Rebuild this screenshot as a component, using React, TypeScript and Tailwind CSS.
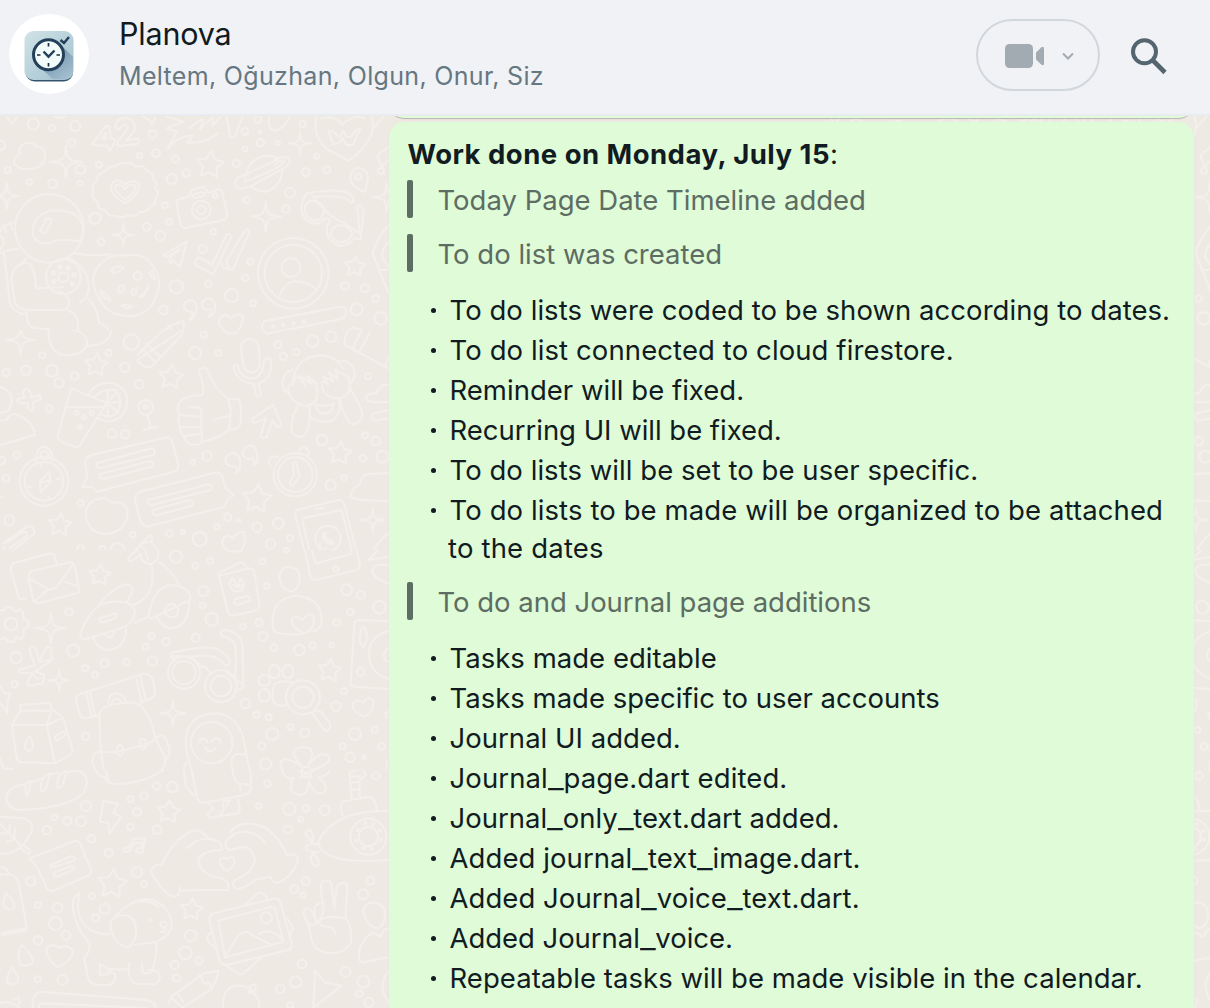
type Dot = [number, number, number];

interface Doodles {
  y: number;
  dots: Dot[];
  stars: Dot[];
  sparks: Dot[];
  paths: string[];
}

const starPath = ([x, y, r]: Dot) => {
  const pts: string[] = [];
  for (let i = 0; i < 10; i++) {
    const a = -Math.PI / 2 + 0.1 + (i * Math.PI) / 5;
    const q = i % 2 ? r * 0.52 : r;
    pts.push(`${(x + Math.cos(a) * q).toFixed(1)} ${(y + Math.sin(a) * q).toFixed(1)}`);
  }
  return `M${pts.join("L")}Z`;
};

const sparkPath = ([x, y, r]: Dot) => {
  const k = r * 0.22;
  return `M${x} ${y - r}Q${x + k * 0.4} ${y - k} ${x + k} ${y - k}Q${x + k} ${y - k * 0.4} ${x + r} ${y}Q${x + k} ${y + k * 0.4} ${x + k} ${y + k}Q${x + k * 0.4} ${y + k} ${x} ${y + r}Q${x - k * 0.4} ${y + k} ${x - k} ${y + k}Q${x - k} ${y + k * 0.4} ${x - r} ${y}Q${x - k} ${y - k * 0.4} ${x - k} ${y - k}Q${x - k * 0.4} ${y - k} ${x} ${y - r}Z`;
};

const ring = (x: number, y: number, r: number, s = r) =>
  `M${x - r} ${y}a${r} ${s} 0 1 0 ${2 * r} 0a${r} ${s} 0 1 0 ${-2 * r} 0Z`;

const doodles: Doodles[] = [
  {
    y: 110,
    dots: [
      [100, 42, 17], [156, 54, 9], [226, 48, 15], [215, 98, 11], [457, 73, 12], [468, 129, 12], [419, 137, 8],
      [527, 148, 10], [515, 207, 15], [559, 189, 11], [297, 164, 9], [242, 178, 14], [23, 180, 9], [88, 216, 8],
      [157, 221, 13], [240, 220, 8], [0, 106, 15], [285, 325, 17], [440, 350, 12], [481, 377, 14], [507, 335, 9],
      [495, 286, 9], [303, 395, 10], [640, 365, 8], [608, 417, 12], [751, 455, 9], [736, 504, 10], [625, 521, 10],
      [529, 530, 20], [695, 557, 20], [759, 580, 9], [490, 600, 13], [609, 675, 8], [773, 28, 11], [735, 64, 10],
      [779, 65, 4], [782, 98, 11], [834, 100, 6], [735, 117, 7], [908, 41, 9], [950, 139, 7], [709, 160, 11],
      [918, 187, 12], [981, 179, 10], [741, 270, 10], [870, 248, 15], [858, 297, 11], [1035, 528, 12],
      [1094, 535, 12], [1127, 566, 10], [1070, 598, 18], [1142, 625, 19], [1143, 183, 9],
      [646, 257, 7], [604, 300, 28], [604, 300, 13], [1075, 200, 9], [873, 473, 28], [190, 502, 15],
      [160, 488, 5], [180, 471, 5], [205, 473, 5], [222, 494, 5], [217, 521, 5], [162, 514, 5],
      [413, 497, 12], [820, 650, 4], [850, 645, 4], [881, 640, 4], [912, 635, 4],
    ],
    stars: [[630, 165, 42], [1065, 470, 32]],
    sparks: [[198, 155, 48], [20, 258, 38], [370, 375, 32], [797, 320, 45], [900, 100, 33], [1160, 262, 42]],
    paths: [
      "M20 20L35 42L52 20M165 20Q180 28 195 20",
      "M318 48L276 104L322 108L328 122L340 106L345 88L332 84L328 48ZM306 85L318 68L317 88Z",
      "M345 50Q350 20 385 25Q412 35 402 65L378 92L412 85Q422 92 412 102L355 108Q345 98 358 88L382 58Q386 42 370 45Q360 52 358 60Z",
      "M430 20L448 30L455 42L466 25M500 20L550 35L500 55L530 65L502 118Q525 85 562 78L580 75L562 98Q620 100 655 70M570 55Q600 25 610 30L600 58Q630 25 640 22L637 48L662 20M680 20L690 80Q705 88 712 60L728 20M808 22Q800 60 828 62Q850 55 870 20",
      "M950 22Q935 80 985 120L1045 152Q1075 135 1095 105Q1130 60 1115 22M965 25Q1005 15 1027 44Q1055 12 1095 24M1115 60L1150 20",
      "M985 62L1000 104L1017 98L1028 85L1040 105H1058L1081 56L1066 62L1052 82L1040 80L1030 62L1018 82L1003 66Z",
      "M60 130Q42 140 42 160Q60 182 90 177Q133 175 136 135Q132 110 108 108Q92 92 70 103Q54 112 60 130Z",
      "M320 178Q330 165 345 170Q365 155 380 160Q395 155 407 170Q430 163 440 182Q458 185 460 208Q475 218 466 235Q482 250 467 264Q470 285 450 288Q440 310 420 305Q405 325 385 315Q365 328 348 317Q325 322 315 300Q292 300 292 275Q272 263 280 245Q272 222 290 214Q290 190 308 188Z",
      "M375 280Q332 255 332 230Q338 208 360 212L375 224Q400 205 416 220Q425 250 375 280ZM375 268Q342 245 344 230Q355 215 375 237Q395 215 407 230Q405 250 375 268Z",
      "M735 210Q742 150 790 139Q825 135 835 148L715 203Q700 215 710 231Q720 240 750 230L860 170Q875 155 865 143Q852 138 825 148M846 180Q846 225 800 245Q770 245 752 228M735 215Q850 170 852 155Q840 148 825 165",
      "M532 270L570 258L574 240L612 230L624 248L658 238Q665 238 667 250L681 310Q682 325 670 330L555 354Q545 352 541 340L530 282ZM580 254L605 246Q617 250 612 257L585 264Q575 262 580 254Z",
      "M1095 246Q1050 230 1051 200Q1055 172 1080 174Q1105 180 1104 205Z M1165 112L1140 128L1133 140L1145 172L1155 160L1166 150",
      "M920 250Q1000 235 1040 247Q1065 260 1060 275Q1052 282 1040 266Q1010 255 938 260L990 315Q1010 330 1030 338L1078 370L1074 305Q1065 290 1080 285Q1095 290 1088 330L1082 388L1062 385Q1050 405 1020 408Q980 395 980 355L990 328L975 325Q960 345 935 340Q900 325 905 280Q912 265 920 250Z",
      "M915 300Q915 275 935 272Q965 275 973 300Q970 330 942 332Q918 325 915 300ZM992 370Q998 345 1022 345Q1050 350 1058 372Q1045 398 1020 397Q997 390 992 370Z",
      ring(148, 355, 103),
      "M98 370Q95 320 150 302Q240 295 249 352Q252 392 230 394Q180 382 150 400Q105 405 98 370ZM125 355L138 328Q148 320 155 332L138 367Q125 370 120 362Z",
      "M48 335Q10 340 0 365M12 345L20 368M30 338L38 360M0 430Q30 415 55 418M0 378Q15 385 10 405L0 418M12 430L30 580Q38 608 80 614M80 445L65 460M75 458Q30 470 35 515L45 580Q60 600 85 600H190Q210 595 207 570Q198 548 178 545M108 535Q105 455 75 458M108 535L190 532",
      "M225 430Q280 440 330 433M207 445Q275 480 265 545Q262 565 240 578M265 568Q290 590 298 640Q335 650 330 690M218 664Q238 660 245 680M80 603Q78 655 110 655L150 658V690M205 602Q240 610 233 665",
      ring(190, 500, 52),
      "M295 470Q325 430 370 437Q435 425 455 465Q490 500 470 555Q455 605 400 618Q325 620 300 570Q262 510 295 470ZM335 480Q350 465 370 472Q365 485 338 490ZM355 545Q355 525 370 527Q378 540 360 550ZM395 550Q395 533 410 534Q410 555 398 555ZM430 560Q448 530 445 525Q440 550 418 560ZM455 500L448 490L458 482L467 510ZM300 540Q335 565 330 572Q305 565 300 540ZM365 588Q380 580 395 590Q385 600 365 588Z",
      "M490 435L560 395L540 470L518 450L513 460Q505 455 510 445L540 418L502 440Z",
      "M588 450Q580 462 595 470L640 494L694 380Q690 368 680 374L636 464L602 445Q592 440 588 450ZM688 472L678 455L736 360Q745 355 748 368L698 480L668 472L665 460",
      ring(880, 490, 106), ring(880, 490, 86),
      "M838 560Q855 515 885 514Q925 515 948 538",
      "M590 590Q585 570 570 570Q550 575 552 592Q565 610 578 605Q580 618 568 630Q592 620 590 590ZM645 585Q640 565 620 565Q603 575 606 592Q620 602 632 598Q635 612 625 622Q650 610 645 585Z",
      "M704 674Q658 660 656 635Q662 612 682 616L693 625Q715 605 729 620Q728 650 704 674Z",
      "M800 632L1020 590Q1040 590 1038 610Q1035 625 1020 628L808 670Q785 670 786 648Q788 635 800 632Z",
      "M1166 345Q1130 385 1118 430L1138 482L1166 550M1166 395Q1138 430 1150 448L1166 470M1138 480H1166",
      "M470 690Q490 650 550 633Q555 660 545 690M505 645Q520 670 540 680",
      "M1040 690Q1045 645 1070 655L1166 690M1100 668L1090 690",
    ],
  },
  {
    y: 330,
    dots: [
      [127, 76, 9], [78, 121, 14], [156, 122, 17], [19, 128, 11], [177, 158, 14], [224, 138, 11], [326, 68, 9],
      [374, 112, 14], [394, 36, 23], [418, 163, 13], [585, 69, 18], [655, 69, 9], [611, 14, 9], [148, 236, 10],
      [336, 311, 13], [376, 313, 13], [834, 44, 11], [850, 79, 11], [889, 66, 9], [938, 33, 17], [993, 20, 16],
      [1104, 139, 9], [966, 330, 16], [1095, 316, 9], [1127, 333, 13], [1089, 384, 10], [1147, 380, 18],
      [992, 465, 15], [1032, 443, 8], [621, 378, 14], [578, 396, 7], [50, 375, 10], [18, 445, 10], [3, 392, 12],
      [242, 520, 9], [28, 571, 15], [242, 655, 9], [307, 656, 9], [352, 660, 21], [398, 614, 8], [508, 610, 10],
      [549, 607, 6], [599, 627, 21], [528, 680, 18], [651, 591, 8], [683, 561, 11], [716, 571, 5], [771, 592, 14],
      [835, 580, 16], [870, 624, 9], [812, 642, 14], [859, 662, 8], [437, 232, 22], [437, 230, 6],
      [230, 248, 6], [275, 250, 6], [253, 262, 6], [239, 291, 6], [133, 376, 12],
    ],
    stars: [[289, 105, 36], [513, 142, 38], [1020, 370, 36], [771, 507, 45], [180, 585, 35]],
    sparks: [[62, 30, 44], [1118, 570, 36]],
    paths: [
      "M145 0Q145 75 205 76Q260 70 262 35Q250 0 215 0M262 48Q330 45 333 0",
      "M412 75L490 0M548 0Q550 15 530 30L455 110Q430 118 412 90ZM425 55L465 95M438 40L480 80",
      "M790 0L800 12L850 0M668 0Q690 18 710 8M1045 0Q1030 30 1035 45L1166 115M1085 0L1058 55M1110 8L1078 65M1166 80L1155 110",
      "M0 172Q35 180 35 215Q30 250 0 248M0 272L20 270Q30 250 45 252Q100 270 104 315L0 345",
      "M68 190Q78 165 90 185L95 203L118 195Q128 205 118 210L98 218L100 238Q92 248 85 235L82 220L58 218Q45 208 60 205L75 204Z",
      "M214 175L174 312Q170 330 195 340L235 353L310 235L318 218ZM200 232H312",
      "M268 190Q285 160 325 158Q385 165 382 220Q370 275 320 274L293 265M285 200Q305 175 345 180Q370 210 355 245Q330 270 300 250M320 218L325 180M320 218L348 190M320 218L362 215M320 218L352 245M320 218L325 260",
      "M442 254L452 294M430 300L472 290",
      "M600 118Q618 105 627 130Q640 175 685 207H715Q725 215 722 280Q715 300 688 298M598 125Q615 175 608 195Q560 195 540 215Q525 240 540 255L605 260Q600 285 605 310Q610 330 600 342Q575 350 560 335L550 317Q538 305 540 290Q530 270 540 258M570 232H595Q610 240 602 258M545 292L602 290M555 318L602 312M685 207L692 240L688 298Q660 325 608 335M640 270L685 258",
      "M722 50Q730 25 750 26Q772 30 776 50L780 105Q770 128 755 127Q735 125 730 105ZM700 110Q705 100 713 105Q720 145 757 146Q790 140 792 90Q800 78 812 90Q820 145 775 160L783 190Q778 205 768 195L762 162Q710 155 700 110Z",
      "M820 224L843 280Q842 295 830 290L817 272L800 320Q790 330 782 318L798 265L765 278Q752 275 758 265Z",
      "M878 160Q885 80 965 76Q1010 80 1028 115M878 120Q850 125 847 160Q850 185 870 190M1010 95Q1050 85 1062 120Q1070 145 1050 160M870 195Q855 165 878 165Q880 140 898 142L915 165L898 138L935 160L920 137L948 160Q965 225 915 227Q880 220 870 195ZM968 178Q960 140 985 165L970 140L1000 155L985 125L1015 148L1005 120L1045 140Q1060 200 1015 205Q980 205 968 178ZM895 225Q870 270 875 305Q890 328 910 318Q935 290 928 225M1050 175Q1085 230 1087 255Q1075 290 1050 280Q1025 245 1020 205M930 260Q960 285 1000 270Q1030 240 1015 205M945 222Q975 235 1000 220Q995 255 968 250Q950 245 945 222Z",
      "M1166 165Q1140 160 1128 190Q1095 190 1098 205Q1105 222 1166 215M1166 240L1120 250Q1110 262 1122 272L1166 265",
      "M275 375L500 322Q512 322 517 335L535 405Q535 420 522 425L290 485L275 470L247 472L262 440L255 395Q258 380 275 375ZM290 400L455 355Q470 360 460 375L300 415Q285 412 290 400ZM300 432L450 393Q465 400 455 410L310 447Q297 445 300 432Z",
      "M420 485L650 427Q665 428 668 445L678 475L702 495L680 512L675 530L440 590Q425 585 420 570L405 510Q405 490 420 485ZM445 510L625 463Q640 465 632 480L455 525Q440 522 445 510ZM458 540L570 510Q585 515 575 527L470 556Q452 555 458 540Z",
      ring(132, 454, 73), ring(132, 454, 58),
      "M108 392Q110 350 133 350Q158 355 158 392M120 455L148 425L152 455L122 487ZM125 457L150 450M122 400L125 412M95 470L82 470M145 500L147 510M170 448L182 445",
      "M290 508Q255 520 257 560Q270 615 325 612Q380 600 383 550Q380 510 335 518Q320 498 290 508Z",
      "M10 640L80 590Q105 585 103 610L35 665Q10 668 10 650M20 638L70 605Q85 605 80 617L30 655",
      "M0 500L8 500M50 690L150 670Q170 670 172 690",
      "M720 400Q720 370 700 368Q675 375 676 395Q685 412 705 408Q715 418 708 430Q722 425 720 400ZM772 375Q768 345 748 347Q725 355 728 375Q740 392 757 385Q765 392 760 405Q775 400 772 375Z",
      ring(886, 434, 65), ring(886, 434, 52),
      "M878 400Q885 390 890 402L898 440L880 465Q868 468 870 455L882 435ZM835 380Q805 375 806 400L815 410M900 365Q900 350 915 352Q930 358 925 375",
      "M1166 430Q1130 430 1125 432Q1085 425 1080 462Q1050 480 1052 500Q1060 512 1166 513",
      "M890 540L1015 510Q1030 510 1035 530L1075 690M890 540Q882 550 890 570L920 690M908 565L1025 540L1062 690M908 575L935 690M948 538L970 533",
      ring(984, 625, 38), "M960 640L958 668L978 655M968 610Q970 645 1000 642L995 630L985 635L975 620L978 610Z",
      "M702 667Q668 660 666 637Q670 615 690 618L700 625Q715 600 732 608Q740 640 725 660Z",
      "M380 690L430 635L450 615Q462 620 452 635Q480 660 475 690M425 650Q440 665 440 690M410 665Q420 675 420 690M430 640Q450 630 455 640",
      "M1166 610Q1130 635 1108 690",
    ],
  },
  {
    y: 550,
    dots: [
      [528, 20, 18], [586, 47, 9], [630, 33, 9], [610, 124, 15], [608, 167, 8], [635, 208, 19], [207, 186, 11],
      [454, 259, 9], [498, 275, 11], [437, 290, 9], [587, 263, 12], [220, 302, 18], [48, 323, 17], [314, 340, 12],
      [256, 355, 9], [285, 374, 9], [380, 336, 10], [457, 333, 14], [44, 403, 9], [787, 34, 8], [800, 108, 8],
      [729, 229, 8], [777, 218, 11], [789, 259, 14], [822, 293, 10], [898, 300, 16], [938, 286, 9], [995, 286, 7],
      [1010, 218, 10], [1040, 119, 16], [1083, 135, 12], [1051, 186, 10], [1138, 172, 19], [1082, 366, 11],
      [1032, 423, 9], [1008, 469, 14], [736, 461, 14], [769, 494, 9], [806, 502, 9], [817, 552, 18], [872, 531, 9],
      [914, 548, 13], [785, 588, 11], [797, 642, 17], [1065, 552, 18], [1124, 539, 9], [1028, 589, 9],
      [1050, 622, 14], [1091, 621, 5], [1144, 590, 10], [257, 559, 11], [33, 222, 19], [1008, 57, 8],
      [919, 664, 14],
    ],
    stars: [[299, 76, 33], [989, 362, 36]],
    sparks: [[152, 235, 46], [178, 391, 32], [519, 490, 38]],
    paths: [
      "M170 40Q165 10 150 10L45 38Q30 42 33 60L55 140Q60 152 78 145M100 62L210 37Q225 38 225 55L238 120Q235 130 222 132L115 160Q102 160 98 145L85 80Q88 65 100 62ZM88 85L145 118Q165 120 175 105L220 42M145 118L102 155M195 95L235 110",
      "M0 180Q10 185 20 172H35L45 185L60 178Q75 190 70 205L85 215V232L70 238Q75 258 62 268L48 260L40 275H22L15 262L0 268",
      "M385 32Q380 20 415 0M385 32Q400 38 420 12Q425 40 450 42Q480 35 475 0M455 42Q470 140 400 165M478 38Q510 55 538 105M435 0L445 30",
      "M300 160Q350 105 380 103Q405 110 395 130L380 157M240 255Q270 165 330 155Q400 150 405 185Q400 225 360 235L260 267Q240 270 240 255ZM298 205L345 190Q355 195 345 205L308 217Q295 215 298 205ZM278 262Q295 300 330 300Q380 290 378 235M315 252Q330 275 345 245M405 218L445 200Q460 105 520 105Q575 115 570 150L465 200Q450 210 445 200M468 198Q485 235 515 235Q570 225 568 152",
      ring(515, 182, 20),
      "M88 300Q100 280 108 300L118 335L140 292Q158 285 153 310L158 328L105 365L133 375L128 400L88 408Q75 405 88 385L98 370L60 368Q50 355 70 357L105 345ZM118 335L150 330M98 372Q110 390 120 385",
      "M0 410L15 430L30 430L22 465V490L10 470L0 460",
      "M228 450Q225 435 245 430L430 372Q455 370 460 395L466 430Q460 450 435 450L420 462M228 450L240 495Q248 510 270 502L298 495M258 430L275 500M270 427L285 497M408 380L425 455M420 377L438 452M325 460Q325 430 350 430Q375 435 378 460M335 458Q350 435 365 458",
      "M298 505Q295 465 350 463Q405 450 425 470Q455 500 465 565L495 620Q500 660 465 675Q390 690 385 690M298 505L302 600L315 690M302 605Q275 605 278 635Q285 680 310 680M302 605Q340 612 405 592Q450 585 465 565Q485 550 495 563Q520 610 500 625M352 590Q360 580 368 590V612Q360 622 352 612ZM420 572Q428 562 438 572V592Q428 605 422 592Z",
      "M60 465L145 458Q155 460 155 475L190 505L217 598Q218 612 210 615L165 640L60 636Q50 630 50 620L35 525L62 482ZM62 482H155L140 525H35M140 525L165 640M140 525L185 505M90 558Q65 590 82 602Q110 605 90 558ZM168 557L190 545Q200 550 192 558L170 572Q160 568 168 557Z",
      "M0 625L10 655L38 657L15 665L0 680M100 690Q120 672 130 680L120 690M150 690Q165 665 182 668L175 690M195 690Q200 665 225 665Q260 670 262 690",
      "M655 70L725 35L740 52M655 70Q655 78 670 75L745 55Q760 55 763 68L778 165Q778 180 765 182L695 198Q685 195 682 180L655 70ZM705 148L740 138Q755 142 750 152L712 165Q700 162 705 148Z",
      "M698 85Q685 95 690 108Q695 125 715 125Q735 115 732 98Q725 85 718 88M703 90L715 112L722 85M698 105Q710 115 727 105",
      "M838 85Q840 50 868 50Q900 55 900 85Q895 120 875 125Q845 120 838 85ZM820 240Q805 145 890 137Q965 145 965 210Q965 240 940 243M820 240Q830 255 905 253M912 250Q875 235 875 210Q885 190 908 210Q925 185 940 198Q948 225 925 245Z",
      "M915 0L930 75Q935 92 950 90L1070 60Q1080 55 1080 45L1070 0M935 0L948 40L1055 12V0M680 0Q700 8 725 3M850 0Q860 15 870 0M1105 30L1135 0M1105 30L1166 20M1166 45Q1115 40 1117 65Q1120 85 1166 100",
      "M1166 213L1075 210Q1062 212 1063 225L1052 395Q1050 410 1065 410L1166 417M1166 243Q1105 260 1107 315Q1110 370 1166 387M1166 295Q1145 305 1155 330L1166 335M1083 238Q1095 225 1098 245L1103 265L1090 292Q1075 275 1080 262Z",
      "M515 325Q505 310 520 307Q620 285 650 297Q690 315 690 340Q680 355 665 335Q645 310 575 320L605 350Q625 350 630 370M575 320L518 318L528 335M705 400Q710 310 705 282Q695 265 665 257Q655 240 678 240Q730 250 728 300L730 410Q720 425 705 418M680 368L730 405",
      ring(552, 368, 48), ring(552, 368, 35), ring(663, 408, 48), ring(663, 408, 31),
      ring(823, 365, 16, 20), ring(864, 365, 16, 20), ring(793, 391, 17, 17), ring(793, 436, 17, 19),
      "M877 397Q820 385 820 415L817 445Q825 475 857 465",
      ring(909, 442, 51), ring(909, 442, 32),
      "M940 490Q945 475 965 487L990 520Q995 540 978 543Q970 540 938 490",
      "M1097 500Q1060 490 1057 465Q1065 445 1090 457Q1105 435 1120 452Q1125 480 1097 500Z",
      ring(635, 578, 62),
      "M562 620Q540 495 640 490Q720 490 735 590L755 690M597 575Q600 565 610 566Q620 568 622 578M635 575Q640 562 650 565Q660 565 660 575M615 592Q630 615 648 592M565 620L578 690M565 638Q545 640 555 690M695 650Q690 610 720 612L738 615M695 650L705 690",
      "M905 648Q870 610 885 598Q905 585 930 595Q945 610 925 645Q960 600 985 618Q1000 640 940 658Q985 662 990 690M905 650Q850 610 842 640Q835 670 900 665L875 690",
      "M1166 485L1155 490L1160 505M1045 685Q1060 655 1070 665Q1095 650 1098 685M1160 635V660M1120 680Q1130 665 1140 680",
    ],
  },
  {
    y: 770,
    dots: [
      [258, 109, 15], [243, 154, 15], [202, 152, 12], [163, 142, 8], [141, 180, 13], [274, 206, 11], [326, 248, 12],
      [392, 87, 9], [432, 77, 11], [470, 48, 11], [517, 51, 16], [411, 126, 12], [392, 171, 10], [471, 179, 13],
      [411, 307, 15], [432, 343, 9], [92, 334, 14], [114, 405, 9], [173, 413, 14], [276, 379, 9], [314, 416, 15],
      [287, 444, 11], [166, 461, 19], [198, 496, 13], [114, 511, 13], [187, 629, 15], [113, 628, 9], [572, 497, 17],
      [556, 549, 19], [597, 572, 11], [524, 585, 12], [529, 624, 11], [776, 108, 8], [802, 41, 10], [868, 117, 18],
      [918, 115, 10], [902, 148, 7], [974, 121, 15], [864, 179, 12], [1128, 18, 11], [1111, 332, 12], [1089, 373, 15],
      [917, 333, 12], [883, 357, 12], [910, 376, 8], [906, 582, 13], [1037, 605, 15], [887, 636, 17], [841, 656, 13],
      [1090, 635, 18], [1078, 671, 10], [1107, 697, 14], [870, 706, 9], [799, 443, 17], [452, 450, 3],
      [1105, 200, 29], [1096, 160, 3], [1120, 162, 3], [1140, 182, 3], [1143, 210, 3], [1115, 237, 3], [1091, 235, 3],
      [1068, 212, 3], [1073, 180, 3], [919, 8, 14],
    ],
    stars: [[506, 126, 36], [337, 342, 45], [575, 419, 34]],
    sparks: [],
    paths: [
      "M80 75Q70 35 90 33Q95 48 82 75ZM82 42Q25 45 18 85Q25 120 60 120Q200 115 250 70Q275 20 240 5Q210 0 205 8M123 62Q118 20 150 10L138 55Q130 70 123 62ZM172 50Q170 8 200 3L190 40Q180 60 172 50ZM90 38L125 25M150 12L175 8",
      "M0 140L75 145Q100 155 95 185Q75 220 68 225L90 240Q92 252 80 250L60 233Q30 255 0 250M0 160L65 230M28 185L30 165M42 205L45 175M20 190H0M40 210L22 215",
      "M287 0Q295 20 315 22Q320 45 365 42Q440 35 490 0M318 0L325 30M552 0L558 50L580 75M575 0L590 80Q595 98 610 98L735 75Q755 65 752 45L715 40Q700 30 698 0M752 45Q755 20 750 0M720 40L722 60M625 98L640 115L630 125Q615 135 630 143L715 130L720 115L712 80M668 95L672 120L660 135M668 95L690 90L680 108",
      "M310 92L353 102L340 130L365 140L328 192L325 158L300 155Z",
      "M385 235L400 205L435 208L428 245Q415 255 408 243Q412 230 425 233L430 218L403 218L392 240Q378 252 370 240Q372 230 385 235",
      "M88 265L225 213Q238 212 242 225L273 298Q275 310 265 317L160 362Q145 365 138 350L110 290ZM152 285L215 258Q228 260 222 272L160 292Q148 294 152 285ZM162 308L215 288Q228 292 220 300L172 320Q158 322 162 308Z",
      "M485 285Q520 205 580 182Q605 178 625 205M560 235Q600 195 645 210Q670 220 665 240Q605 242 595 270Q600 310 650 322Q695 330 682 360H600L540 362L535 375Q520 385 500 370Q455 320 453 300Q465 280 485 285M540 362V352M690 188Q710 155 765 162Q825 175 862 258Q885 245 895 265Q880 320 835 338Q815 340 812 320L765 330Q735 355 710 357Q690 345 705 330Q760 305 765 270Q760 235 730 230L690 240Q670 235 680 212Q700 185 735 185Q780 190 795 220",
      "M681 303Q655 285 660 270Q670 258 680 268Q695 255 704 270Q705 290 681 303Z",
      "M0 292Q20 290 25 310Q55 320 58 350L80 470Q80 480 72 483L5 495M0 312L25 315M18 370Q50 400 42 415Q15 425 10 400ZM5 490L75 475",
      "M64 525Q105 560 97 580Q80 592 60 582Q50 555 64 525ZM36 592Q60 620 53 635Q40 650 22 637Q18 620 36 592Z",
      "M172 592Q135 560 140 535Q150 518 180 533Q200 522 217 540Q222 570 172 592Z",
      "M238 370Q215 380 218 410Q225 475 270 520Q268 550 252 565L265 625Q270 645 300 645H330Q350 630 345 612L325 605M238 370Q230 410 237 435Q260 495 330 492M330 465Q335 435 375 435Q410 440 408 490Q405 525 380 532Q340 520 330 465ZM345 440Q390 390 440 387Q500 395 515 455Q518 495 470 515L405 525M415 395Q450 390 475 410M470 515Q470 570 455 600M300 615V582L325 598L388 598M300 615L325 612M388 578Q380 635 410 642H465Q480 635 480 615Q475 600 445 600M425 580L428 610H450L460 600M488 455Q500 455 500 465Q495 475 485 470Q475 460 488 455M490 475Q500 475 495 485L480 485",
      "M845 0Q855 30 880 25M880 25Q860 65 890 72Q920 85 928 35Q940 75 970 70Q990 50 955 22Q980 20 990 0M919 8L895 0M919 8L945 0M919 8L900 25M919 8L935 25",
      "M1028 138L1022 110Q1020 95 1040 92L1110 80Q1125 82 1130 120M1055 90L1048 10Q1060 0 1075 0M1080 85L1078 30L1098 15L1090 0M1050 38L1078 35M1052 60L1080 58M1048 18L1078 20M1166 122Q1000 120 955 215Q960 285 1166 270M952 222Q935 225 935 205M955 245Q935 250 920 240Q912 225 938 220L915 190Q920 178 930 180Q945 190 938 220M938 250Q925 270 945 290Q960 285 955 270L938 250",
      ring(1105, 200, 54),
      "M970 402Q955 345 970 332Q990 328 995 345L1003 415L1010 350Q1025 330 1042 345L1037 440Q1060 480 1052 520Q1035 550 990 550Q945 545 935 510L925 460Q905 435 915 415Q935 408 950 460Q975 435 970 402Q955 395 945 410Q940 445 952 452M960 445Q955 465 970 468L998 473L1008 497M960 452Q975 435 1035 445M920 458Q935 470 950 458",
      "M1090 425Q1090 400 1125 397Q1155 405 1155 430Q1155 470 1130 475Q1095 465 1090 425ZM1166 478H1155L1140 500L1118 487Q1070 520 1078 570L1085 578L1166 562",
      "M640 430L825 385Q838 385 842 400L875 520Q876 535 865 540L680 585Q665 585 658 570L628 450Q628 435 640 430ZM655 452L815 410L825 415L850 515L675 562ZM680 552L715 495Q740 475 755 495L815 525M775 492Q810 470 850 510M730 408L775 368Q785 365 805 388M862 445L880 475L868 500M635 485Q620 495 622 510L645 535M675 585L715 612H728L785 562",
      "M505 700L515 680L610 610L655 602Q650 640 630 660L545 714M600 615L612 640L628 640L635 658M515 685L545 710M535 675L550 695M668 714Q670 650 705 647Q735 645 745 655Q780 680 778 714M748 670Q745 645 765 642Q775 660 748 670",
      "M945 602L975 637L1025 647L940 714ZM98 714V690Q105 665 125 665L440 690Q465 695 468 714M115 714L120 700L440 714M0 700Q30 690 60 714M38 690L55 682L60 700M1166 605Q1130 640 1166 700",
    ],
  },
];

function DoodleTile({ dx }: { dx: number }) {
  return (
    <g transform={`translate(${dx} 0)`}>
      {doodles.map((d) => (
        <svg key={d.y} x={0} y={d.y} width={389} height={d.y === 770 ? 238 : 220} overflow="hidden">
          <g transform="scale(.33333)">
            {d.dots.map(([x, y, r], i) => (
              <circle key={i} cx={x} cy={y} r={r} />
            ))}
            {d.stars.map((s, i) => (
              <path key={i} d={starPath(s)} />
            ))}
            {d.sparks.map((s, i) => (
              <path key={i} d={sparkPath(s)} />
            ))}
            {d.paths.map((p, i) => (
              <path key={i} d={p} />
            ))}
          </g>
        </svg>
      ))}
    </g>
  );
}

function Wallpaper() {
  return (
    <svg
      className="absolute inset-0 -z-10"
      width="1210"
      height="1008"
      fill="none"
      stroke="#f3f0eb"
      strokeWidth="6"
      strokeLinecap="round"
      strokeLinejoin="round"
      aria-hidden="true"
    >
      <DoodleTile dx={0} />
      <DoodleTile dx={823} />
    </svg>
  );
}

function Avatar() {
  return (
    <div className="flex size-20 items-center justify-center rounded-full bg-white">
      <svg width="80" height="80" viewBox="0 0 80 80" fill="none">
        <defs>
          <linearGradient id="tile" x1="16" y1="18" x2="64" y2="66" gradientUnits="userSpaceOnUse">
            <stop stopColor="#d0e3e6" />
            <stop offset="0.6" stopColor="#b3ced8" />
            <stop offset="1" stopColor="#9fbccb" />
          </linearGradient>
          <linearGradient id="shade" x1="44" y1="44" x2="60" y2="64" gradientUnits="userSpaceOnUse">
            <stop stopColor="#7c9cb6" />
            <stop offset="1" stopColor="#a5c1cf" />
          </linearGradient>
        </defs>
        <rect x="16.500" y="18.500" width="47.500" height="49" rx="9" fill="#35546c" />
        <rect x="15.500" y="17" width="49" height="49" rx="9" fill="url(#tile)" />
        <path d="M51 30L64 43V57Q64 65 56 65H44L29 52Z" fill="url(#shade)" />
        <circle cx="39.500" cy="40.800" r="15" fill="#f3fafa" stroke="#243f59" strokeWidth="3" />
        <path d="M39.500 29v3.500M39.500 49v3.500M28 41h3.500M47.500 41h3.500" stroke="#1e3044" strokeWidth="1.700" />
        <path d="M34.500 37.500l5 5.200 6-6.200" stroke="#243f59" strokeWidth="2.400" />
        <path d="M51.500 26l3.500 3 5-6" stroke="#243f59" strokeWidth="2.400" />
      </svg>
    </div>
  );
}

function Header() {
  return (
    <header className="relative z-10 flex h-[116px] shrink-0 items-start border-b-2 border-[#e8ebf0] bg-[#f0f2f6] pr-[41px] pl-[9px]">
      <div className="pt-3.5">
        <Avatar />
      </div>
      <div className="flex grow flex-col pt-3.5 pl-[30px] whitespace-nowrap">
        <h1 className="h-10 text-[30.5px] leading-10 tracking-[-0.2px] text-[#111b21]">Planova</h1>
        <p className="h-11 text-[25px] leading-[44px] tracking-[0.33px] text-[#667781]">
          Meltem, Oğuzhan, Olgun, Onur, Siz
        </p>
      </div>
      <button
        className="mt-[19px] flex h-[72px] w-[124px] items-center rounded-full border-2 border-[#d2d7db] pt-0.5 pl-[27px]"
        aria-label="Video call"
      >
        <svg width="40" height="24" viewBox="0 0 40 24" fill="#a3abb2">
          <rect width="28" height="24" rx="4.500" />
          <path d="M31 8.500L36.200 3.400Q39 1.500 39 4.500V19.500Q39 22.500 36.200 20.600L31 15.500Z" />
        </svg>
        <svg className="ml-4" width="14" height="10" viewBox="0 0 14 10" fill="none" stroke="#a3abb2" strokeWidth="2">
          <path d="M2 2.500l5 5 5-5" />
        </svg>
      </button>
      <button className="mt-9 ml-[29px]" aria-label="Search">
        <svg width="40" height="40" viewBox="0 0 40 40" fill="none" stroke="#54656f">
          <circle cx="15.500" cy="15.800" r="11.500" strokeWidth="4" />
          <path d="M23.500 24L36 36.500" strokeWidth="4.600" />
          <path d="M22.500 24.500h2.500" strokeWidth="2" />
        </svg>
      </button>
    </header>
  );
}

function Quote({ children, className }: { children: string; className: string }) {
  return (
    <div className={"flex h-[38px] " + className}>
      <span className="mr-[24.500px] w-1.5 shrink-0 rounded-[2px] bg-[#5d6d63]" />
      <span className="leading-[40px] text-[#5d6d63]">{children}</span>
    </div>
  );
}

interface Item {
  text: string;
  cls: string;
  rest?: string;
}

const firstItems: Item[] = [
  { text: "To do lists were coded to be shown according to dates.", cls: "tracking-[0.05px]" },
  { text: "To do list connected to cloud firestore.", cls: "tracking-[0.1px]" },
  { text: "Reminder will be fixed.", cls: "tracking-[0.02px]" },
  { text: "Recurring UI will be fixed.", cls: "tracking-[-0.02px]" },
  { text: "To do lists will be set to be user specific.", cls: "tracking-[0.05px]" },
  { text: "To do lists to be made will be organized to be attached", cls: "tracking-[0.1px]", rest: "to the dates" },
];

const secondItems: Item[] = [
  { text: "Tasks made editable", cls: "tracking-[0.02px]" },
  { text: "Tasks made specific to user accounts", cls: "tracking-[0px]" },
  { text: "Journal UI added.", cls: "tracking-[0.03px]" },
  { text: "Journal_page.dart edited.", cls: "tracking-[0.1px]" },
  { text: "Journal_only_text.dart added.", cls: "tracking-[0px]" },
  { text: "Added journal_text_image.dart.", cls: "tracking-[0.08px]" },
  { text: "Added Journal_voice_text.dart.", cls: "tracking-[0.06px]" },
  { text: "Added Journal_voice.", cls: "tracking-[-0.04px]" },
  { text: "Repeatable tasks will be made visible in the calendar.", cls: "tracking-[0.05px]" },
];

function FileText({ text }: { text: string }) {
  return (
    <>
      {text.split(/(_)/).map((part, i) =>
        part === "_" ? (
          <span key={i} className="mr-[3px] inline-block origin-left scale-x-[1.25]">
            _
          </span>
        ) : (
          part
        ),
      )}
    </>
  );
}

function List({ items }: { items: Item[] }) {
  return (
    <ul className="flex flex-col gap-0.5 pl-6">
      {items.map((it) => (
        <li key={it.text} className="leading-[38px]">
          <div className="flex h-[38px] items-center">
            <span className="size-[5px] shrink-0 rounded-full bg-[#111b21]" />
            <span className={"pl-[13.500px] " + it.cls}>
              <FileText text={it.text} />
            </span>
          </div>
          {it.rest && <div className="h-[38px] pl-[17px] tracking-[0.18px]">{it.rest}</div>}
        </li>
      ))}
    </ul>
  );
}

export default function App() {
  return (
    <div className="relative isolate flex h-[1008px] w-[1210px] flex-col overflow-hidden bg-[#eeeae3] font-['Inter',sans-serif]">
      <Wallpaper />
      <Header />
      <main className="ml-[389px] w-[805px] shrink-0">
        <div className="-mt-5 h-[22px] rounded-b-[15px] bg-[#dffbd7] shadow-[0_1px_1px_rgba(11,20,26,0.25)]" />
        <article className="mt-1 h-[886px] rounded-t-[15px] bg-[#dffbd7] px-[18px] pt-[13px] text-[27.5px] whitespace-nowrap text-[#111b21] shadow-[0_1px_1px_rgba(11,20,26,0.13)]">
          <h2 className="h-[45px] pl-[0.5px] text-[27.5px] leading-[38px]">
            <strong className="font-bold tracking-[0.48px]">Work done on Monday, July 15</strong>:
          </h2>
          <Quote className="tracking-[0px]">Today Page Date Timeline added</Quote>
          <Quote className="mt-4 tracking-[0px]">To do list was created</Quote>
          <div className="mt-[19px]">
            <List items={firstItems} />
          </div>
          <Quote className="mt-[15px] tracking-[-0.02px]">To do and Journal page additions</Quote>
          <div className="mt-[19px]">
            <List items={secondItems} />
          </div>
        </article>
      </main>
    </div>
  );
}
